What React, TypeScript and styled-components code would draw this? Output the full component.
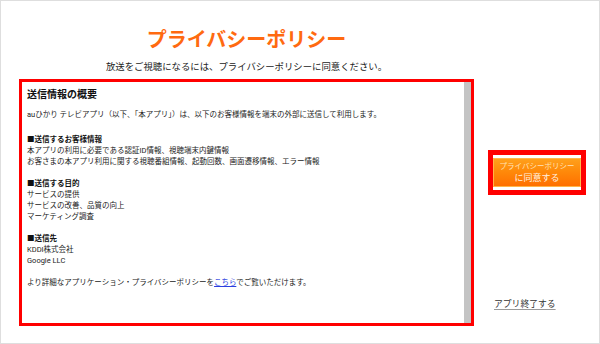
import React from "react";
import styled, { createGlobalStyle } from "styled-components";

const GlobalStyle = createGlobalStyle`
  html, body {
    margin: 0;
    padding: 0;
    background: #ffffff;
  }
  body {
    font-family: Roboto, "Noto Sans CJK JP", "Noto Sans", sans-serif;
    color: #222;
  }
  * { box-sizing: border-box; }
`;

const Page = styled.div`
  width: 600px;
  height: 344px;
  border: 1px solid #dedede;
  background: #fff;
  display: flex;
  padding: 27px 0 0 18px;
`;

const MainColumn = styled.div`
  width: 455px;
  display: flex;
  flex-direction: column;
  align-items: center;
`;

const Title = styled.h1`
  margin: 0;
  font-size: 20px;
  line-height: 24px;
  font-weight: 700;
  color: #ff6a10;
  letter-spacing: 0;
`;

const Subtitle = styled.p`
  margin: 9px 0 0;
  font-size: 9.4px;
  line-height: 12px;
  color: #222;
`;

const PolicyBox = styled.div`
  margin-top: 6px;
  width: 455px;
  height: 247px;
  border: 3px solid #ff0000;
  display: flex;
`;

const PolicyContent = styled.div`
  flex: 1;
  padding: 6px 5px 0 5px;
  font-size: 7.5px;
  line-height: 11px;
  color: #222;
`;

const ScrollTrack = styled.div`
  width: 7px;
  background: #c4c4c4;
`;

const PolicyHeading = styled.h2`
  margin: 0;
  font-size: 10px;
  line-height: 14px;
  font-weight: 700;
  color: #111;
`;

const Block = styled.div<{ $gap: number }>`
  margin-top: ${(p) => p.$gap}px;
`;

const Line = styled.div<{ $bold?: boolean }>`
  font-weight: ${(p) => (p.$bold ? 700 : 400)};
  color: ${(p) => (p.$bold ? "#111" : "#222")};
  white-space: nowrap;
`;

const InlineLink = styled.a`
  color: #2b3fe0;
  text-decoration: underline;
`;

const SideColumn = styled.div`
  flex: 1;
  display: flex;
  flex-direction: column;
  align-items: flex-start;
  padding: 122px 0 0 14px;
`;

const AgreeFrame = styled.div`
  width: 98px;
  height: 45px;
  border: 5px solid #ff0000;
  padding: 3px 0;
  background: #fff;
`;

const AgreeButton = styled.button`
  width: 88px;
  height: 29px;
  border: 1px solid #ffb54a;
  padding: 0;
  margin: 0;
  display: flex;
  flex-direction: column;
  align-items: center;
  justify-content: center;
  background: linear-gradient(to bottom, #ffa01c 0%, #ff8a0a 45%, #ff7000 100%);
  font-family: Roboto, "Noto Sans CJK JP", sans-serif;
  cursor: pointer;
`;

const ButtonLine = styled.span<{ $size: number; $lh: number; $color: string }>`
  display: block;
  font-size: ${(p) => p.$size}px;
  line-height: ${(p) => p.$lh}px;
  color: ${(p) => p.$color};
  white-space: nowrap;
`;

const ExitLink = styled.a`
  margin-top: 103px;
  margin-left: 6px;
  font-size: 8.8px;
  line-height: 12px;
  color: #333;
  text-decoration: underline;
  text-decoration-color: #999;
  text-underline-offset: 2px;
`;

export default function App() {
  return (
    <>
      <GlobalStyle />
      <Page>
        <MainColumn>
          <Title>プライバシーポリシー</Title>
          <Subtitle>放送をご視聴になるには、プライバシーポリシーに同意ください。</Subtitle>
          <PolicyBox>
            <PolicyContent>
              <PolicyHeading>送信情報の概要</PolicyHeading>
              <Block $gap={7}>
                <Line>
                  auひかり テレビアプリ（以下、「本アプリ」）は、以下のお客様情報を端末の外部に送信して利用します。
                </Line>
              </Block>
              <Block $gap={14}>
                <Line $bold>■送信するお客様情報</Line>
                <Line>本アプリの利用に必要である認証ID情報、視聴端末内鍵情報</Line>
                <Line>お客さまの本アプリ利用に関する視聴番組情報、起動回数、画面遷移情報、エラー情報</Line>
              </Block>
              <Block $gap={11}>
                <Line $bold>■送信する目的</Line>
                <Line>サービスの提供</Line>
                <Line>サービスの改善、品質の向上</Line>
                <Line>マーケティング調査</Line>
              </Block>
              <Block $gap={11}>
                <Line $bold>■送信先</Line>
                <Line>KDDI株式会社</Line>
                <Line>Google LLC</Line>
              </Block>
              <Block $gap={11}>
                <Line>
                  より詳細なアプリケーション・プライバシーポリシーを
                  <InlineLink href="#">こちら</InlineLink>
                  でご覧いただけます。
                </Line>
              </Block>
            </PolicyContent>
            <ScrollTrack />
          </PolicyBox>
        </MainColumn>
        <SideColumn>
          <AgreeFrame>
            <AgreeButton type="button">
              <ButtonLine $size={7.5} $lh={11} $color="#ffe2b8">
                プライバシーポリシー
              </ButtonLine>
              <ButtonLine $size={9} $lh={13} $color="#fff1e0">
                に同意する
              </ButtonLine>
            </AgreeButton>
          </AgreeFrame>
          <ExitLink href="#">アプリ終了する</ExitLink>
        </SideColumn>
      </Page>
    </>
  );
}
